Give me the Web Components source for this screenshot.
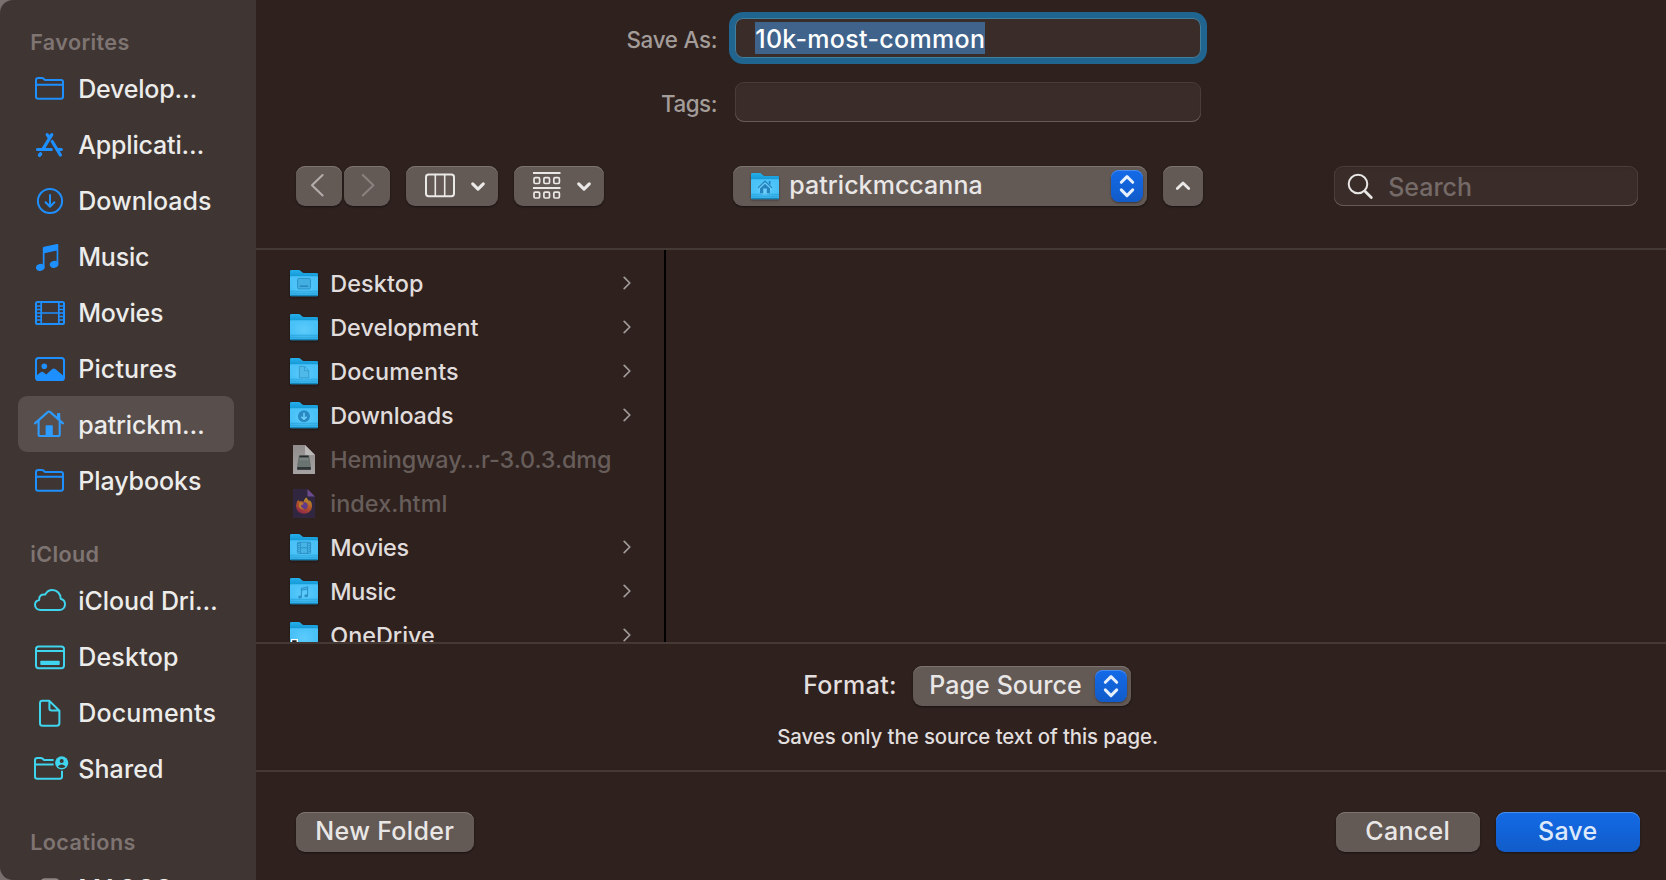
<!DOCTYPE html>
<html lang="en">
<head>
<meta charset="utf-8">
<title>Save As</title>
<style>
html,body{margin:0;height:100%;overflow:hidden;background:#2e211e}
body{font-family:Inter,"Liberation Sans",sans-serif;color:#e2dfde}
</style>
</head>
<body>
<save-dialog></save-dialog>
<script>
const FONT = 'Inter,"Liberation Sans",sans-serif';
const pen = document.createElement('canvas').getContext('2d');
const define = (name, html, setup) => customElements.define(name, class extends HTMLElement {
  connectedCallback() {
    if (this.shadowRoot) return;
    const root = this.attachShadow({ mode: 'open' });
    root.innerHTML = typeof html === 'function' ? html(this) : html;
    if (setup) setup(this, root);
  }
});

/* Label whose tracking is set so that its last glyph ends `ink` pixels from its left edge. */
const BEARING = 0.8;
define('ui-label', e => {
  const size = +e.getAttribute('size') || 25, weight = e.getAttribute('weight') || 450;
  const text = e.getAttribute('text'), ink = +e.getAttribute('ink');
  pen.font = `${weight} ${size}px ${FONT}`;
  const m = pen.measureText(text);
  const gap = ink ? (ink + BEARING - m.actualBoundingBoxRight) / (text.length - 1) : 0;
  return `<style>:host{display:block;flex:none;white-space:pre}
  span{display:block;font:${weight} ${size}px/1.2 ${FONT};letter-spacing:${gap.toFixed(3)}px;margin-left:${-BEARING}px;margin-right:${(-gap).toFixed(2)}px}</style><span>${text}</span>`;
});

const folderLine = 'M6 10.3Q6 8 8.5 8H11.5Q13 8 14 9L15 10H31Q33 10 33 12.3V26.5Q33 28.7 30.8 28.7H8.2Q6 28.7 6 26.5ZM6 14.8H33';
const ICONS = {
  folder: `<path d="${folderLine}"/>`,
  apps: '<g stroke-width="3.2"><path d="M17.2 8.6L19.4 12M21.8 8.6L12.8 23.4M22.2 15.5L30.4 29M7.5 23.5H21.3M28 23.5H31.3"/><path stroke-width="3.6" d="M10.5 28L9.6 29.2"/></g>',
  downloads: '<circle cx="20" cy="19" r="12.1"/><path d="M20 13V24.6M15.6 20.3L20 24.8L24.4 20.3"/>',
  music: '<path fill="currentColor" stroke="none" d="M12.8 10Q12.8 9 14 8.7L27 6Q28.3 5.8 28.3 7V26H26.6V12.4L14.5 15.2V29H12.8Z"/><g fill="currentColor" stroke="none"><ellipse cx="10.3" cy="29.3" rx="4.4" ry="3.5" transform="rotate(-14 10.3 29.3)"/><ellipse cx="24.1" cy="26.3" rx="4.4" ry="3.5" transform="rotate(-14 24.1 26.3)"/></g>',
  movies: '<rect x="6" y="8" width="28" height="22" rx="1.6"/><path stroke-width="1.7" d="M11.2 8V30M28.8 8V30M11 19H29"/><path stroke-width="1.7" d="M6 12H11M6 15.5H11M6 19H11M6 22.5H11M6 26H11M29 12H34M29 15.5H34M29 19H34M29 22.5H34M29 26H34"/>',
  pictures: '<rect x="6" y="8" width="28" height="22" rx="2.6"/><circle cx="14.3" cy="16.3" r="2.8" fill="currentColor" stroke="none"/><path fill="currentColor" stroke="none" d="M6 25.7L10.8 22.3Q12.3 21.2 13.7 22.4L16.2 24.5L22 19.2Q23.9 17.6 25.7 19.2L34 26.3V30H6Z"/>',
  home: '<path stroke-width="2.1" d="M5 17.4L18 5.9Q19 5.1 20 5.9L33 17.4M8.6 15V28.4Q8.6 30 10.2 30H28Q29.7 30 29.7 28.4V15"/><path fill="currentColor" stroke="none" d="M27 12V7.9Q27 7 27.9 7H29.3Q30.3 7 30.3 7.9V15ZM15.6 20.1Q15.6 19.3 16.4 19.3H22Q22.8 19.3 22.8 20.1V30H15.6Z"/>',
  cloud: '<path d="M10.8 28C7.2 28 5 25.7 5 22.8C5 20.2 6.7 18.4 9.2 17.9C8.6 14.4 11.8 11.7 15.2 12.6C16.7 9.6 19.3 8 22.4 8C27.1 8 30.6 11.6 30.7 16.7C33.4 17.4 35 19.6 35 22.2C35 25.6 32.6 28 29.3 28Z"/>',
  desktop: '<rect x="6" y="8.4" width="28" height="21.8" rx="2.6"/><path d="M6 12.9H34"/><rect x="10.3" y="22.8" width="19.4" height="4.2" rx=".8" fill="currentColor" stroke="none"/>',
  documents: '<path d="M10 9.2Q10 6.8 12.4 6.8H19.2L29.4 16.8V29Q29.4 31.8 26.8 31.8H12.6Q10 31.8 10 29.2ZM19.4 7V14.6Q19.4 16.6 21.4 16.6H29.2"/>',
  shared: '<path d="M32 20.8V26.5Q32 28.7 29.8 28.7H7.2Q5 28.7 5 26.5V10.3Q5 8 7.5 8H10.5Q12 8 13 9L14 10H23.6M5 14.6H23.6" stroke-linecap="butt"/><circle cx="31.7" cy="12.8" r="6.6" fill="currentColor" stroke="none"/><circle cx="31.7" cy="10.9" r="2" fill="#3f3532" stroke="none"/><path d="M27.8 16.4Q31.7 12.4 35.6 16.4Q31.7 19.4 27.8 16.4Z" fill="#3f3532" stroke="none"/>',
  drive: '<rect x="10.6" y="8.2" width="18.8" height="22" rx="4" fill="currentColor" stroke="none"/>'
};
define('side-icon', e => `<style>:host{display:block;flex:none;width:40px;height:36px}svg{display:block}</style>
<svg width="40" height="36" viewBox="0 0 40 36" fill="none" stroke="currentColor" stroke-width="2" stroke-linecap="round" stroke-linejoin="round">${ICONS[e.getAttribute('name')]}</svg>`);

define('side-item', e => `<style>
:host{display:flex;align-items:center;height:56px;margin:0 22px 0 18px;padding-left:12px;border-radius:9px;box-sizing:border-box;color:#ececeb}
:host([selected]){background:#584e4b}
side-icon{color:${e.getAttribute('tint') || '#1e8fff'};margin-right:9px}
ui-label{padding-top:2px}
</style><side-icon name="${e.getAttribute('icon')}"></side-icon><ui-label text="${e.getAttribute('text')}" ink="${e.getAttribute('ink')}"></ui-label>`);

define('side-section', e => `<style>
:host{display:block}
header{height:64px;box-sizing:border-box;padding:34px 0 0 31px;color:#7e7472}
</style><header><ui-label weight="600" size="21.6" text="${e.getAttribute('text')}" ink="${e.getAttribute('ink')}"></ui-label></header><slot></slot>`);

define('side-bar', `<style>
:host{display:block;overflow:hidden;background:#3f3532;border-radius:13px 0 0 13px}
.list{margin-top:-4px}
</style><div class="list">
<side-section text="Favorites" ink="97.5">
<side-item icon="folder" text="Develop…" ink="116.5"></side-item>
<side-item icon="apps" text="Applicati…" ink="123.5"></side-item>
<side-item icon="downloads" text="Downloads" ink="132"></side-item>
<side-item icon="music" text="Music" ink="70"></side-item>
<side-item icon="movies" text="Movies" ink="84"></side-item>
<side-item icon="pictures" text="Pictures" ink="97.5"></side-item>
<side-item icon="home" text="patrickm…" ink="124" selected tint="#2d9bff"></side-item>
<side-item icon="folder" text="Playbooks" ink="122"></side-item>
</side-section>
<side-section text="iCloud" ink="67.5">
<side-item tint="#3fd5ee" icon="cloud" text="iCloud Dri…" ink="137"></side-item>
<side-item tint="#3fd5ee" icon="desktop" text="Desktop" ink="99"></side-item>
<side-item tint="#3fd5ee" icon="documents" text="Documents" ink="136.5"></side-item>
<side-item tint="#3fd5ee" icon="shared" text="Shared" ink="83"></side-item>
</side-section>
<side-section text="Locations" ink="103.5">
<side-item tint="#8d8583" icon="drive" text="MACOS…" ink="114"></side-item>
</side-section></div>`);

/* Push button, also the body of the popups. */
define('push-button', `<style>
:host{display:flex;align-items:center;justify-content:center;flex:none;box-sizing:border-box;height:40px;border-radius:9px;background:#635955;color:#e9e7e6;box-shadow:inset 0 1px 0 #7d7471,0 1px 2px rgba(0,0,0,.45)}
:host([primary]){background:linear-gradient(#136ae6,#115cc9);color:#dce9fc;box-shadow:inset 0 1px 0 #4a8cee,0 1px 2px rgba(0,0,0,.45)}
</style><slot></slot>`);

define('popup-cap', `<style>:host{display:block;flex:none;width:32px;height:32px;border-radius:8px;background:linear-gradient(#136ae8,#115bc9);box-shadow:inset 0 1px 0 #4a8cee,0 1px 2px rgba(0,0,0,.4)}svg{display:block}</style>
<svg width="32" height="32" fill="none" stroke="#e6effc" stroke-width="3" stroke-linecap="round" stroke-linejoin="round"><path d="M10.3 12.3L16 6.6L21.7 12.3M10.3 19.9L16 25.6L21.7 19.9"/></svg>`);

define('text-field', `<style>
:host{display:flex;align-items:center;flex:none;box-sizing:border-box;height:40px;border-radius:9px;background:#3a2c29;box-shadow:inset 0 -1px 0 #665b58,inset 0 0 0 1px #4a3e3b,inset 0 2px 2px #2f232155}
:host([focused]){border-radius:8px;box-shadow:0 0 0 6px #20658f,inset 0 0 0 1px #417f9f}
</style><slot></slot>`);

const stroke = (w, color) => `fill="none" stroke="${color}" stroke-width="${w}" stroke-linecap="round" stroke-linejoin="round"`;
const GLYPHS = {
  house: '<circle cx="14" cy="16" r="6" fill="#7fd4fb" opacity=".5"/><g fill="#2583bd"><path d="M6.6 14.4L14 7.2L21.4 14.4L20.5 15.3L14 9.1L7.5 15.3Z"/><path d="M17.8 8H19.5V12L17.8 10.3Z"/><path d="M9 15.4L14 10.7L19 15.4V20.2H15.8V15.4H12.2V20.2H9Z"/></g>',
  desktop: '<rect x="7.5" y="8.4" width="13" height="10.6" rx="1.4" fill="#43aee0" stroke="#2b93c9"/><path d="M9.8 16.2H18.2" stroke="#2583bd" stroke-width="1.4"/>',
  documents: '<path d="M9.4 8.4H14.8L18.8 12.5V19.8H9.4ZM14.6 8.6V12.7H18.6" fill="#4fbaea" stroke="#3399cb" stroke-width=".9"/>',
  downloads: '<circle cx="14" cy="14.2" r="6" fill="#2989c2"/><path d="M14 10.8V17M11.3 14.8L14 17.3L16.7 14.8" fill="none" stroke="#6fd0fa" stroke-width="1.5"/>',
  movies: '<rect x="7.4" y="8.2" width="13.2" height="11.2" rx=".8" fill="#47b4e6" stroke="#2c91c7"/><path d="M10.4 8V19.6M17.6 8V19.6M10.4 13.8H17.6" stroke="#2c91c7"/><path d="M8.8 9V19M19.2 9V19" stroke="#2c91c7" stroke-width="1.4" stroke-dasharray="1 1"/>',
  music: '<path d="M11.4 19V10.4L17.6 9V17.6M11.4 12.3L17.6 10.9" fill="none" stroke="#2c91c7" stroke-width="1.1"/><ellipse cx="10" cy="19" rx="1.9" ry="1.5" fill="#2c91c7"/><ellipse cx="16.2" cy="17.7" rx="1.9" ry="1.5" fill="#2c91c7"/>',
  alias: '<path d="M1 20V17H8V27H1Z" fill="#fff"/><path d="M2.2 18.2H6.6V27H5V20H2.2Z" fill="#1c1c1c"/>'
};
const FILES = {
  dmg: '<defs><linearGradient id="p" x2="0" y2="1"><stop stop-color="#8f8c8b"/><stop offset="1" stop-color="#a5a2a1"/></linearGradient></defs><path d="M3 0H15L25 10V29H3Z" fill="url(#p)"/><path d="M15 0L25 10H16Q15 10 15 9Z" fill="#bbb9b8"/><path d="M8.6 12Q8.6 10.6 10 10.6H18Q19.4 10.6 19.4 12L20.8 20V24.6H7.2V20Z" fill="#6b7371"/><path d="M9.4 11.4H18.6" stroke="#252a2b" stroke-width="1.7"/><path d="M10 14.2H18" stroke="#7b8481" stroke-width="2"/><path d="M7.2 22H20.8V24.8H7.2Z" fill="#2f3436"/>',
  html: '<defs><linearGradient id="f" x1=".8" x2=".3" y2="1"><stop stop-color="#b79a32"/><stop offset=".5" stop-color="#b55227"/><stop offset="1" stop-color="#8c254f"/></linearGradient></defs><path d="M3 0H17.5L25 7.5V29H3Z" fill="#30263f"/><path d="M17.5 0L25 7.5H18.5Q17.5 7.5 17.5 6.5Z" fill="#6c4b8e"/><path d="M9 12.3L8.3 10.8Q5.4 14 6.1 18.2C6.9 22.4 10.1 24.7 14 24.7C18.8 24.7 22 21.3 22 17C22 13.7 20.7 11.9 19.5 11.2L19.2 12.5C18.2 10.5 16.9 10.2 16.8 8.6C14.5 9.4 13.9 11.5 13.8 12.8C11.7 12.3 10.3 12.3 9 12.3Z" fill="url(#f)"/><circle cx="14.2" cy="16.8" r="3.5" fill="#613a8c"/><path d="M9.3 13.4Q12.6 12.8 13.8 14.8Q12.8 16 11 16Q11 19.2 14.6 20.3Q10 21 8.4 17.3Z" fill="#b8752b"/>'
};
define('file-icon', e => {
  const n = e.getAttribute('name');
  if (FILES[n]) return `<style>:host{display:block;flex:none;width:28px;height:29px}svg{display:block}</style><svg width="28" height="29">${FILES[n]}</svg>`;
  return `<style>:host{display:block;flex:none;width:28px;height:27px}svg{display:block;overflow:visible;filter:drop-shadow(0 1px 1px rgba(0,0,0,.35))}</style>
<svg width="28" height="27"><defs><linearGradient id="a" x2="0" y2="1"><stop stop-color="#25afea"/><stop offset="1" stop-color="#0887c6"/></linearGradient><linearGradient id="b" x2="0" y2="1"><stop stop-color="#4ac2f8"/><stop offset=".7" stop-color="#43bff6"/><stop offset="1" stop-color="#2fa9e3"/></linearGradient><radialGradient id="c"><stop stop-color="#6fd3ff" stop-opacity=".6"/><stop offset="1" stop-color="#6fd3ff" stop-opacity="0"/></radialGradient></defs>
<path d="M0 1.2Q0 0 1.2 0H8.6Q9.8 0 10.8 1L12 2.2Q12.8 3 14 3H26.8Q28 3 28 4.2V12H0Z" fill="url(#a)"/>
<path d="M0 7.2Q0 6.2 1 6.2H27Q28 6.2 28 7.2V25Q28 26.2 26.8 26.2H1.2Q0 26.2 0 25Z" fill="url(#b)"/><rect y="6.2" width="28" height="20" fill="url(#c)"/>
<path d="M0 21.3H28M0 23.3H28" stroke="#2ba3dc" stroke-width=".8"/><path d="M.6 25.6H27.4" stroke="#1584ba" stroke-width="1.1"/>${GLYPHS[n] || ''}</svg>`;
});

define('file-row', e => `<style>
:host{display:flex;align-items:center;height:44px;padding:0 33px 0 34px;color:${e.hasAttribute('dim') ? '#675d5a' : '#e0dddc'}}
file-icon{margin-right:13px}
ui-label{flex:1;padding-top:2px}
svg{display:${e.hasAttribute('dim') ? 'none' : 'block'};flex:none}
</style><file-icon name="${e.getAttribute('icon')}"></file-icon><ui-label size="23.4" text="${e.getAttribute('text')}" ink="${e.getAttribute('ink')}"></ui-label><svg width="8" height="14" ${stroke(1.7, '#a29b99')}><path d="M1.2 1.4L6.8 7L1.2 12.6"/></svg>`);

define('save-fields', `<style>
:host{display:grid;grid-template-columns:460px 466px;column-gap:19px;row-gap:24px;padding-top:18px;justify-content:start}
.name{justify-self:end;align-self:center;color:#a39c99;padding-top:4px;margin-right:-1.5px}
.sel{display:flex;align-items:center;height:32px;width:230px;margin-left:20px;background:#3f638b;color:#fff}
.sel ui-label{margin-left:1px;padding-top:1px}
</style>
<ui-label class="name" size="22.4" text="Save As:" ink="88.5"></ui-label>
<text-field focused><div class="sel"><ui-label text="10k-most-common" ink="228"></ui-label></div></text-field>
<ui-label class="name" size="22.4" text="Tags:" ink="54"></ui-label>
<text-field></text-field>`);

define('tool-bar', `<style>
:host{display:flex;align-items:center;padding:44px 28px 42px 40px}
.sp{flex:1}.path{padding:0 4px 0 18px;justify-content:flex-start}
.path ui-label{flex:1;padding-bottom:3px;margin-left:11px}
svg{display:block}
</style>
<push-button style="width:46px"><svg width="46" height="40" ${stroke(2.1, '#b3adab')}><path d="M26.6 9L16 19.2L26.6 29.4"/></svg></push-button>
<push-button style="width:46px;margin-left:2px"><svg width="46" height="40" ${stroke(2.1, '#8a817e')}><path d="M18.8 9L29.4 19.2L18.8 29.4"/></svg></push-button>
<push-button style="width:92px;margin-left:16px"><svg width="92" height="40" ${stroke(2, '#ebe9e8')}><rect x="20" y="8.6" width="28" height="21.6" rx="2.6"/><path stroke-width="1.6" d="M29.3 8.6V30M38.7 8.6V30"/><path stroke-width="3.1" d="M66.7 17.8L72 23.2L77.3 17.8"/></svg></push-button>
<push-button style="width:90px;margin-left:16px"><svg width="90" height="40" ${stroke(1.7, '#ebe9e8')}><path stroke-width="2" stroke-linecap="butt" d="M19 7H46.5M19 22H46.5"/><g><rect x="20" y="11.7" width="5.6" height="5.8" rx="1.2"/><rect x="29.9" y="11.7" width="5.6" height="5.8" rx="1.2"/><rect x="39.8" y="11.7" width="5.6" height="5.8" rx="1.2"/><rect x="20" y="26.2" width="5.6" height="5.8" rx="1.2"/><rect x="29.9" y="26.2" width="5.6" height="5.8" rx="1.2"/><rect x="39.8" y="26.2" width="5.6" height="5.8" rx="1.2"/></g><path stroke-width="3.1" d="M64.7 17.8L70 23.2L75.3 17.8"/></svg></push-button>
<push-button class="path" style="width:414px;margin-left:129px"><file-icon name="house"></file-icon><ui-label text="patrickmccanna" ink="191.5"></ui-label><popup-cap></popup-cap></push-button>
<push-button style="width:40px;margin-left:16px"><svg width="40" height="40" ${stroke(2.8, '#ebe9e8')}><path d="M14.3 22.6L20 17L25.7 22.6"/></svg></push-button>
<div class="sp"></div>
<text-field style="width:304px"><svg width="55" height="40" ${stroke(2, '#e9e7e6')}><circle cx="24" cy="18" r="9.3"/><path stroke-width="2.8" d="M31 25.2L37.3 31.4"/></svg><ui-label style="color:#746a67;padding-top:1px" text="Search" ink="82"></ui-label></text-field>`);

define('file-browser', `<style>
:host{display:flex;height:392px;border-top:2px solid #443935;border-bottom:2px solid #443935;overflow:hidden}
.col{width:410px;box-sizing:border-box;padding-top:11px;border-right:2px solid #000;overflow:hidden;display:flex;flex-direction:column}
file-row{flex:none}
</style><div class="col">
<file-row icon="desktop" text="Desktop" ink="92"></file-row>
<file-row icon="plain" text="Development" ink="147.5"></file-row>
<file-row icon="documents" text="Documents" ink="127"></file-row>
<file-row icon="downloads" text="Downloads" ink="122"></file-row>
<file-row dim icon="dmg" text="Hemingway…r-3.0.3.dmg" ink="279"></file-row>
<file-row dim icon="html" text="index.html" ink="115.5"></file-row>
<file-row icon="movies" text="Movies" ink="77.5"></file-row>
<file-row icon="music" text="Music" ink="65"></file-row>
<file-row icon="alias" text="OneDrive" ink="103"></file-row>
</div>`);

define('format-panel', `<style>
:host{display:flex;flex-direction:column;height:128px;box-sizing:border-box;padding:22px 0 0 522px;border-bottom:2px solid #443935}
.row{display:flex;align-items:center;padding-left:26px}
.row>ui-label{width:109px;padding-bottom:3px}
push-button{width:218px;padding:0 4px 0 17px;justify-content:flex-start}
push-button ui-label{flex:1;padding-bottom:3px}
.note{margin-top:19px}
</style><div class="row"><ui-label text="Format:" ink="91"></ui-label><push-button><ui-label text="Page Source" ink="151"></ui-label><popup-cap></popup-cap></push-button></div>
<ui-label class="note" size="20.4" text="Saves only the source text of this page." ink="379"></ui-label>`);

define('action-bar', `<style>
:host{display:flex;gap:16px;padding:40px 26px 0 40px}
.sp{flex:1}ui-label{padding-bottom:3px}
</style><push-button style="width:178px"><ui-label text="New Folder" ink="138"></ui-label></push-button><div class="sp"></div>
<push-button style="width:144px"><ui-label text="Cancel" ink="82.5"></ui-label></push-button>
<push-button primary style="width:144px"><ui-label text="Save" ink="57.5"></ui-label></push-button>`);

define('save-dialog', `<style>
:host{display:grid;grid-template-columns:256px 1fr;height:100vh;overflow:hidden;background:linear-gradient(90deg,#77706e 14px,#2e211e 14px)}
main{background:#2e211e;min-width:0;overflow:hidden}
side-bar{height:100vh}
</style><side-bar></side-bar><main><save-fields></save-fields><tool-bar></tool-bar><file-browser></file-browser><format-panel></format-panel><action-bar></action-bar></main>`);
</script>
</body>
</html>
